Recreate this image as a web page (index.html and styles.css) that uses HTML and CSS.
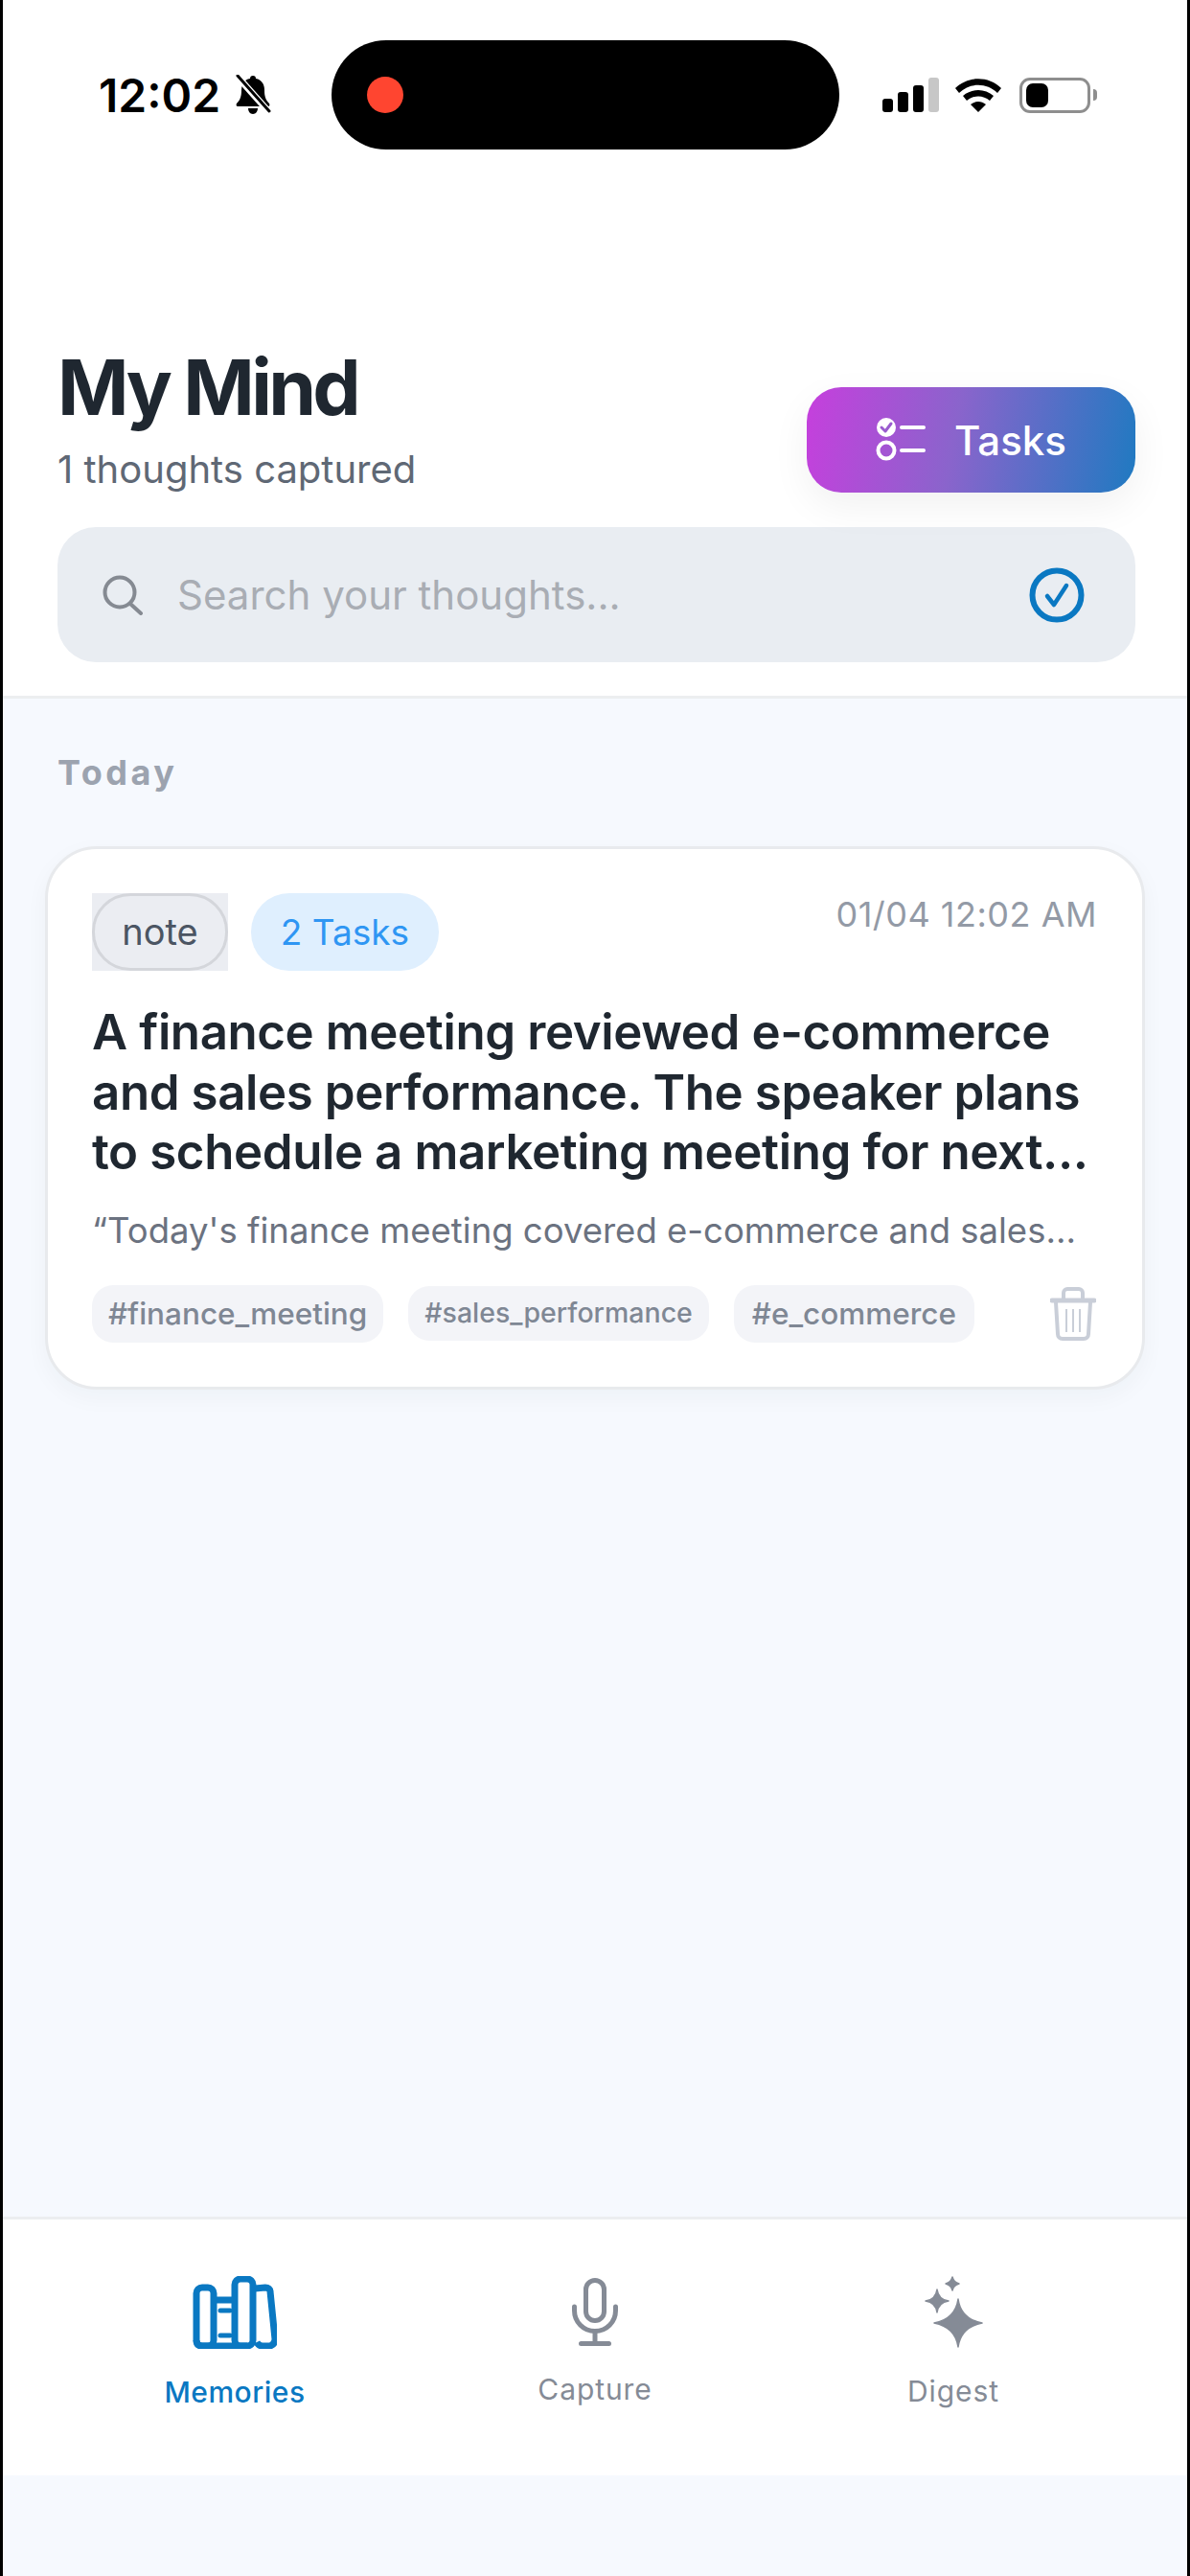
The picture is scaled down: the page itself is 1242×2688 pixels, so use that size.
FILE: index.html
```html
<!DOCTYPE html>
<html>

<head>
    <title>My Mind</title>
    <link rel="stylesheet" href="styles.css">
</head>

<body>

<div class="screen">
    <div class="top">
        <div class="status-bar">
            <span class="clock">12:02</span>
            <svg class="bell" width="38" height="42" viewBox="0 0 38 42">
                <path d="M19 1c2 0 3 1 3 3 6 1 9 6 9 12 0 6 1 10 5 14 1 2 0 3-2 3H4c-2 0-3-1-2-3 4-4 5-8 5-14 0-6 3-11 9-12 0-2 1-3 3-3zM14 35h10c0 3-2 6-5 6s-5-3-5-6z" fill="#000"/>
                <path d="M3 2l32 36" stroke="#fff" stroke-width="7"/>
                <path d="M3 1l33 37" stroke="#000" stroke-width="3" stroke-linecap="round"/>
            </svg>
            <div class="island"><span class="rec-dot"></span></div>
            <div class="signal">
                <span class="bar bar-1"></span>
                <span class="bar bar-2"></span>
                <span class="bar bar-3"></span>
                <span class="bar bar-4"></span>
            </div>
            <svg class="wifi" width="50" height="36" viewBox="0 0 50 36">
                <path d="M1 11C14-2 36-2 49 11l-4 5C34 5 16 5 5 16z" fill="#000"/>
                <path d="M9 19c9-8 23-8 32 0l-4 5c-7-6-17-6-24 0z" fill="#000"/>
                <path d="M17 28c5-4 11-4 16 0l-8 8z" fill="#000"/>
            </svg>
            <div class="battery"><span class="battery-level"></span></div>
            <span class="battery-nub"></span>
        </div>

        <div class="head-row">
            <div>
                <h1>My Mind</h1>
                <p class="count">1 thoughts captured</p>
            </div>
            <div class="tasks-btn">
                <svg width="52" height="46" viewBox="0 0 52 46">
                    <circle cx="11" cy="10" r="10" fill="#fff"/>
                    <path d="M6 10l4 4 6-8" fill="none" stroke="#9a5ccf" stroke-width="3" stroke-linecap="round" stroke-linejoin="round"/>
                    <circle cx="11" cy="34" r="8.5" fill="none" stroke="#fff" stroke-width="4"/>
                    <path d="M27 10h23M27 34h23" stroke="#fff" stroke-width="4" stroke-linecap="round"/>
                </svg>
                <span>Tasks</span>
            </div>
        </div>

        <div class="search">
            <svg width="44" height="42" viewBox="0 0 44 42">
                <circle cx="19" cy="18" r="15.5" fill="none" stroke="#858a92" stroke-width="4"/>
                <path d="M30 30l11 10" stroke="#858a92" stroke-width="4" stroke-linecap="round"/>
            </svg>
            <span class="placeholder">Search your thoughts...</span>
            <svg width="58" height="58" viewBox="0 0 58 58">
                <circle cx="29" cy="29" r="25.5" fill="none" stroke="#0a78c2" stroke-width="6"/>
                <path d="M19 30l7 9 13-20" fill="none" stroke="#0a78c2" stroke-width="4.5" stroke-linecap="round" stroke-linejoin="round"/>
            </svg>
        </div>
    </div>

    <div class="content">
        <div class="section-title">Today</div>

        <div class="card">
            <div class="card-top">
                <span class="note-box"><span class="note">note</span></span>
                <span class="task-count">2 Tasks</span>
                <span class="date">01/04 12:02 AM</span>
            </div>
            <div class="card-title">A finance meeting reviewed e-commerce and sales performance. The speaker plans to schedule a marketing meeting for next...</div>
            <div class="card-quote">“Today's finance meeting covered e-commerce and sales...</div>
            <div class="card-tags">
                <span class="tag">#finance_meeting</span>
                <span class="tag tag-small">#sales_performance</span>
                <span class="tag tag-wide">#e_commerce</span>
                <svg class="trash" width="48" height="56" viewBox="0 0 48 56">
                    <path d="M14 13V6c0-2 2-4 4-4h12c2 0 4 2 4 4v7" fill="none" stroke="#c9ced8" stroke-width="4"/>
                    <path d="M2 14h44" stroke="#c9ced8" stroke-width="5" stroke-linecap="round"/>
                    <path d="M6 16l2 33c0 3 2 5 5 5h22c3 0 5-2 5-5l2-33" fill="none" stroke="#c9ced8" stroke-width="4"/>
                    <path d="M17 23v24M24 23v24M31 23v24" stroke="#c9ced8" stroke-width="2"/>
                </svg>
            </div>
        </div>
    </div>

    <div class="tabs">
        <div class="tab tab-active">
            <svg width="88" height="76" viewBox="0 0 88 76">
                <g fill="none" stroke="#0a78c2" stroke-width="7" stroke-linejoin="round">
                    <rect x="4" y="12" width="18" height="61" rx="6"/>
                    <rect x="44" y="3" width="19" height="70" rx="6"/>
                    <path d="M22 25h22M4 67c0 4 2 6 6 6h47"/>
                    <path d="M65 13l11-1c3 0 5 2 5 4l5 50c0 4-2 6-5 7h-8c-3 0-5-2-6-4"/>
                </g>
                <path d="M29 36h10M29 62h10" stroke="#0a78c2" stroke-width="5" stroke-linecap="round"/>
            </svg>
            <span>Memories</span>
        </div>
        <div class="tab tab-capture">
            <svg width="88" height="76" viewBox="0 0 88 76">
                <g fill="none" stroke="#858b96" stroke-width="5" stroke-linecap="round">
                    <rect x="34.5" y="4.5" width="19" height="42" rx="9.5"/>
                    <path d="M22.5 32v4c0 12 9.500 21.500 21.500 21.500s21.500-9.500 21.500-21.500v-4"/>
                    <path d="M44 58v12.500M29.500 70.500h29"/>
                </g>
            </svg>
            <span>Capture</span>
        </div>
        <div class="tab tab-digest">
            <svg width="88" height="76" viewBox="0 0 88 76">
                <g fill="#858b96" stroke="#858b96" stroke-width="1.500" stroke-linejoin="round">
                    <path d="M49 24c2 14 10 22 25 25-15 3-23 11-25 25-2-14-10-22-25-25 15-3 23-11 25-25z"/>
                    <path d="M27 14c1 7 5 11 12 12-7 1-11 5-12 12-1-7-5-11-12-12 7-1 11-5 12-12z"/>
                    <path d="M43 1c1 4 3 6 7 7-4 1-6 3-7 7-1-4-3-6-7-7 4-1 6-3 7-7z"/>
                </g>
            </svg>
            <span>Digest</span>
        </div>
    </div>
</div>

</body>

</html>
```

FILE: styles.css
```css
* {
    box-sizing: border-box;
    font-family: "Inter", "Liberation Sans", sans-serif;
}
body {
    margin: 0;
}
.screen {
    width: 1242px;
    height: 2688px;
    display: flex;
    flex-direction: column;
    background: #f6f9fe;
    border-left: 3px solid #000;
    border-right: 3px solid #000;
}

/* status bar */
.top {
    height: 729px;
    background: #fff;
    border-bottom: 3px solid #eceef0;
    padding: 42px 54px 0 57px;
}
.status-bar {
    display: flex;
    align-items: center;
    height: 114px;
    margin-right: -3px;
}
.clock {
    margin-left: 43px;
    font-size: 48px;
    font-weight: 600;
    color: #000;
}
.bell {
    margin-left: 15px;
}
.island {
    width: 530px;
    height: 114px;
    margin-left: 63px;
    padding-left: 37px;
    display: flex;
    align-items: center;
    background: #000;
    border-radius: 57px;
}
.rec-dot {
    width: 38px;
    height: 38px;
    border-radius: 50%;
    background: #ff4530;
}
.signal {
    display: flex;
    align-items: flex-end;
    gap: 5px;
    height: 36px;
    margin-left: 45px;
}
.bar {
    width: 11px;
    background: #000;
    border-radius: 3px;
}
.bar-1 { height: 14px; }
.bar-2 { height: 21px; }
.bar-3 { height: 28px; }
.bar-4 { height: 36px; background: #c7c7c7; }
.wifi {
    margin-left: 16px;
}
.battery {
    width: 74px;
    height: 37px;
    margin-left: 18px;
    padding: 3px 4px;
    border: 3px solid #8e8e8e;
    border-radius: 11px;
}
.battery-level {
    display: block;
    width: 23px;
    height: 25px;
    background: #000;
    border-radius: 7px;
}
.battery-nub {
    width: 4px;
    height: 12px;
    margin-left: 3px;
    background: #8e8e8e;
    border-radius: 0 4px 4px 0;
}

/* header */
.head-row {
    display: flex;
    justify-content: space-between;
    align-items: flex-end;
    margin-top: 200px;
}
h1 {
    margin: 0 0 13px 0;
    font-size: 80px;
    line-height: 96px;
    font-weight: 700;
    letter-spacing: -3.7px;
    color: #1f2730;
}
.count {
    margin: 0;
    font-size: 40px;
    line-height: 50px;
    color: #5f6875;
}
.tasks-btn {
    width: 343px;
    height: 110px;
    margin-bottom: 1px;
    display: flex;
    align-items: center;
    justify-content: center;
    gap: 30px;
    border-radius: 36px;
    background: linear-gradient(100deg, #c63fdd 0%, #8a64cc 45%, #1f7ac1 100%);
    box-shadow: 0 14px 40px rgba(0, 0, 0, 0.06);
    color: #fff;
    font-size: 42px;
    font-weight: 500;
}
.search {
    height: 141px;
    margin-top: 35px;
    padding: 0 53px 0 46px;
    display: flex;
    align-items: center;
    background: #e9edf2;
    border-radius: 40px;
}
.placeholder {
    flex: 1;
    margin-left: 35px;
    font-size: 42px;
    color: #a9adb4;
}

/* memories list */
.content {
    flex: 1;
    padding: 0 44px;
}
.section-title {
    margin: 54px 0 0 13px;
    font-size: 36px;
    line-height: 46px;
    font-weight: 700;
    letter-spacing: 3.5px;
    color: #9ca3af;
}
.card {
    height: 567px;
    margin-top: 54px;
    padding: 46px 47px 0 46px;
    background: #fff;
    border: 3px solid #e8eaed;
    border-radius: 54px;
    box-shadow: 0 8px 24px rgba(30, 40, 60, 0.04);
}
.card-top {
    display: flex;
    align-items: flex-start;
}
.note-box {
    background: #ebedf2;
}
.note {
    display: block;
    width: 142px;
    height: 81px;
    border: 3px solid #d4d6db;
    border-radius: 40px;
    text-align: center;
    font-size: 38px;
    line-height: 75px;
    color: #4b5563;
}
.task-count {
    width: 196px;
    height: 81px;
    margin-left: 24px;
    border-radius: 40px;
    background: #dfeffe;
    text-align: center;
    font-size: 37px;
    line-height: 81px;
    color: #2f96f3;
}
.date {
    margin-left: auto;
    font-size: 36px;
    line-height: 44px;
    letter-spacing: 0.5px;
    color: #939aa6;
}
.card-title {
    margin-top: 33px;
    font-size: 51px;
    line-height: 62.5px;
    font-weight: 600;
    letter-spacing: -0.4px;
    color: #1f2730;
}
.card-quote {
    margin-top: 28px;
    font-size: 36.5px;
    line-height: 44px;
    color: #6b7280;
}
.card-tags {
    display: flex;
    align-items: center;
    gap: 26px;
    margin-top: 35px;
}
.tag {
    height: 60px;
    padding: 0 17px;
    background: #f3f4f8;
    border-radius: 22px;
    font-size: 31.5px;
    line-height: 60px;
    font-weight: 500;
    color: #7f8794;
}
.tag-small {
    height: 57px;
    font-size: 28.5px;
    line-height: 55px;
}
.tag-wide {
    padding: 0 19px;
}
.trash {
    margin-left: auto;
    margin-right: 1px;
}

/* bottom tabs */
.tabs {
    height: 270px;
    margin-bottom: 105px;
    padding: 59px 53px 0 54px;
    display: grid;
    grid-template-columns: 376px 376px 372px;
    background: #fff;
    border-top: 3px solid #eceef0;
}
.tab {
    display: flex;
    flex-direction: column;
    align-items: center;
    gap: 25px;
    font-size: 30px;
    line-height: 40px;
    font-weight: 500;
    letter-spacing: 0.5px;
    color: #858b96;
}
.tab-active {
    color: #0a78c2;
}
.tab-capture {
    gap: 22px;
    font-weight: 400;
    letter-spacing: 0.9px;
}
.tab-digest {
    gap: 24px;
    font-weight: 400;
    letter-spacing: 0.9px;
}
```
